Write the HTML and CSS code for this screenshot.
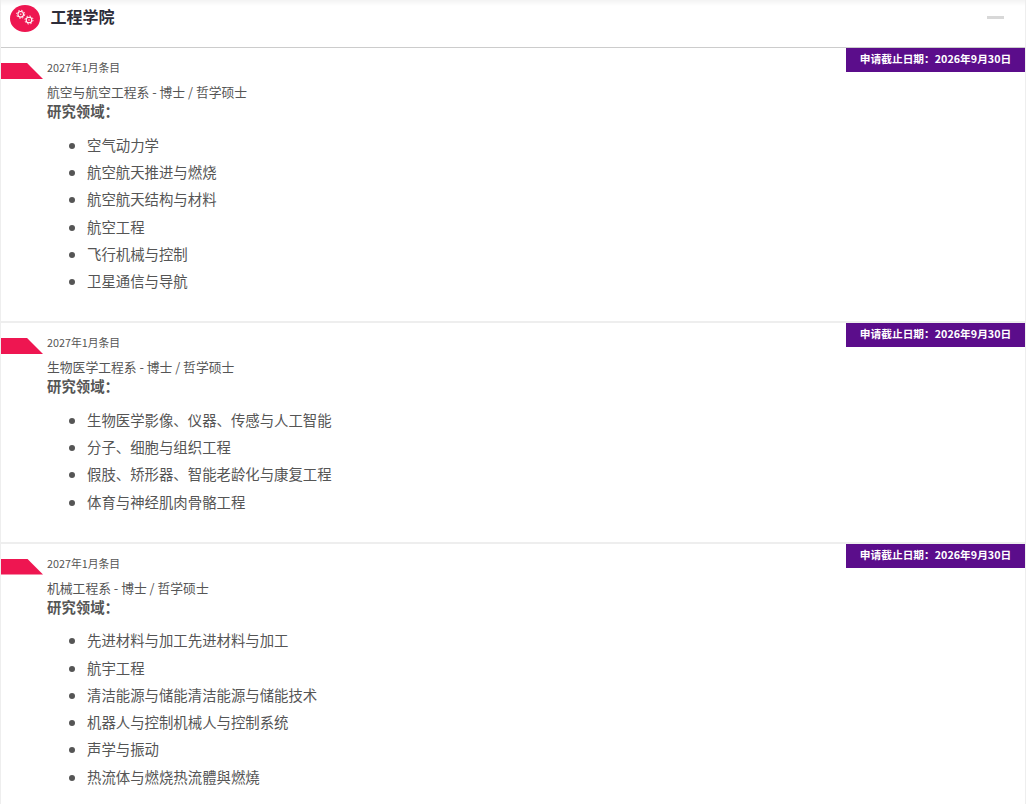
FILE: index.html
```html
<!DOCTYPE html>
<html lang="zh-CN">
<head>
<meta charset="utf-8">
<title>工程学院</title>
<link rel="stylesheet" href="styles.css">
</head>
<body>
<div class="panel">
  <header class="head">
    <span class="logo">
      <svg width="30" height="27" viewBox="0 0 30 27" fill="none" stroke="#fff">
        <circle cx="10.7" cy="9.3" r="2.8" stroke-width="1.1"/>
        <circle cx="10.7" cy="9.3" r="4" stroke-width="1" stroke-dasharray="1.5 1.64"/>
        <circle cx="10.7" cy="9.3" r="0.8" stroke="none" fill="#ffd0dc"/>
        <circle cx="19" cy="15" r="2.8" stroke-width="1.1"/>
        <circle cx="19" cy="15" r="4" stroke-width="1" stroke-dasharray="1.5 1.64"/>
        <circle cx="19" cy="15" r="0.8" stroke="none" fill="#ffd0dc"/>
      </svg>
    </span>
    <h1 class="school">工程学院</h1>
    <span class="collapse"></span>
  </header>

  <section class="card card-first">
    <div class="deadline">申请截止日期：2026年9月30日</div>
    <div class="ribbon"></div>
    <div class="body">
      <div class="date">2027年1月条目</div>
      <div class="dept">航空与航空工程系 - 博士 / 哲学硕士</div>
      <div class="label">研究领域：</div>
      <ul class="areas">
        <li>空气动力学</li>
        <li>航空航天推进与燃烧</li>
        <li>航空航天结构与材料</li>
        <li>航空工程</li>
        <li>飞行机械与控制</li>
        <li>卫星通信与导航</li>
      </ul>
    </div>
  </section>

  <section class="card">
    <div class="deadline">申请截止日期：2026年9月30日</div>
    <div class="ribbon"></div>
    <div class="body">
      <div class="date">2027年1月条目</div>
      <div class="dept">生物医学工程系 - 博士 / 哲学硕士</div>
      <div class="label">研究领域：</div>
      <ul class="areas">
        <li>生物医学影像、仪器、传感与人工智能</li>
        <li>分子、细胞与组织工程</li>
        <li>假肢、矫形器、智能老龄化与康复工程</li>
        <li>体育与神经肌肉骨骼工程</li>
      </ul>
    </div>
  </section>

  <section class="card">
    <div class="deadline">申请截止日期：2026年9月30日</div>
    <div class="ribbon"></div>
    <div class="body">
      <div class="date">2027年1月条目</div>
      <div class="dept">机械工程系 - 博士 / 哲学硕士</div>
      <div class="label">研究领域：</div>
      <ul class="areas">
        <li>先进材料与加工先进材料与加工</li>
        <li>航宇工程</li>
        <li>清洁能源与储能清洁能源与储能技术</li>
        <li>机器人与控制机械人与控制系统</li>
        <li>声学与振动</li>
        <li>热流体与燃烧热流體與燃燒</li>
      </ul>
    </div>
  </section>
</div>
</body>
</html>
```
FILE: styles.css
```css
html, body {
  margin: 0;
  padding: 0;
  background: #fff;
  overflow: hidden;
}
body {
  font-family: "Noto Sans CJK SC", sans-serif;
  color: #555;
  height: 804px;
}
.panel {
  border-left: 1px solid #eee;
  border-right: 1px solid #eee;
  height: 804px;
  overflow: hidden;
  box-sizing: border-box;
}
.head {
  height: 47px;
  display: flex;
  align-items: flex-start;
  padding: 5px 21px 0 9px;
  box-sizing: border-box;
  background: linear-gradient(#f3f3f3, #fff 6px);
}
.logo {
  width: 30px;
  height: 27px;
  border-radius: 50%;
  background: #ee1651;
  display: block;
  flex: none;
}
.logo svg { display: block; }
.school {
  margin: 0 0 0 10.5px;
  font-size: 16px;
  line-height: 23px;
  font-weight: 700;
  color: #2d2d3a;
}
.collapse {
  margin: 11px 0 0 auto;
  width: 17px;
  height: 3px;
  background: #d8d8d8;
}
.card {
  position: relative;
  border-top: 2px solid #eee;
}
.card-first { border-top: 1px solid #ccc; }
.deadline {
  position: absolute;
  top: 0;
  right: 0;
  width: 179px;
  height: 24px;
  background: #5b0d8b;
  color: #fff;
  font-size: 10.72px;
  font-weight: 700;
  line-height: 21px;
  text-align: center;
}
.ribbon {
  position: absolute;
  top: 15px;
  left: 0;
  width: 42px;
  height: 16px;
  background: #ee1651;
  clip-path: polygon(0 0, 62% 0, 100% 100%, 0 100%);
}
.body { padding: 12px 0 0 46px; }
.date {
  font-size: 10.8px;
  line-height: 15px;
}
.dept {
  margin-top: 8px;
  padding-bottom: 1px;
  font-size: 12.8px;
  line-height: 18px;
}
.label {
  font-size: 14.4px;
  font-weight: 700;
  line-height: 18px;
}
.areas {
  margin: 10.9px 0 0;
  padding: 0 0 26.9px 40px;
  font-size: 14.4px;
}
.areas li {
  line-height: 27.2px;
}
```
